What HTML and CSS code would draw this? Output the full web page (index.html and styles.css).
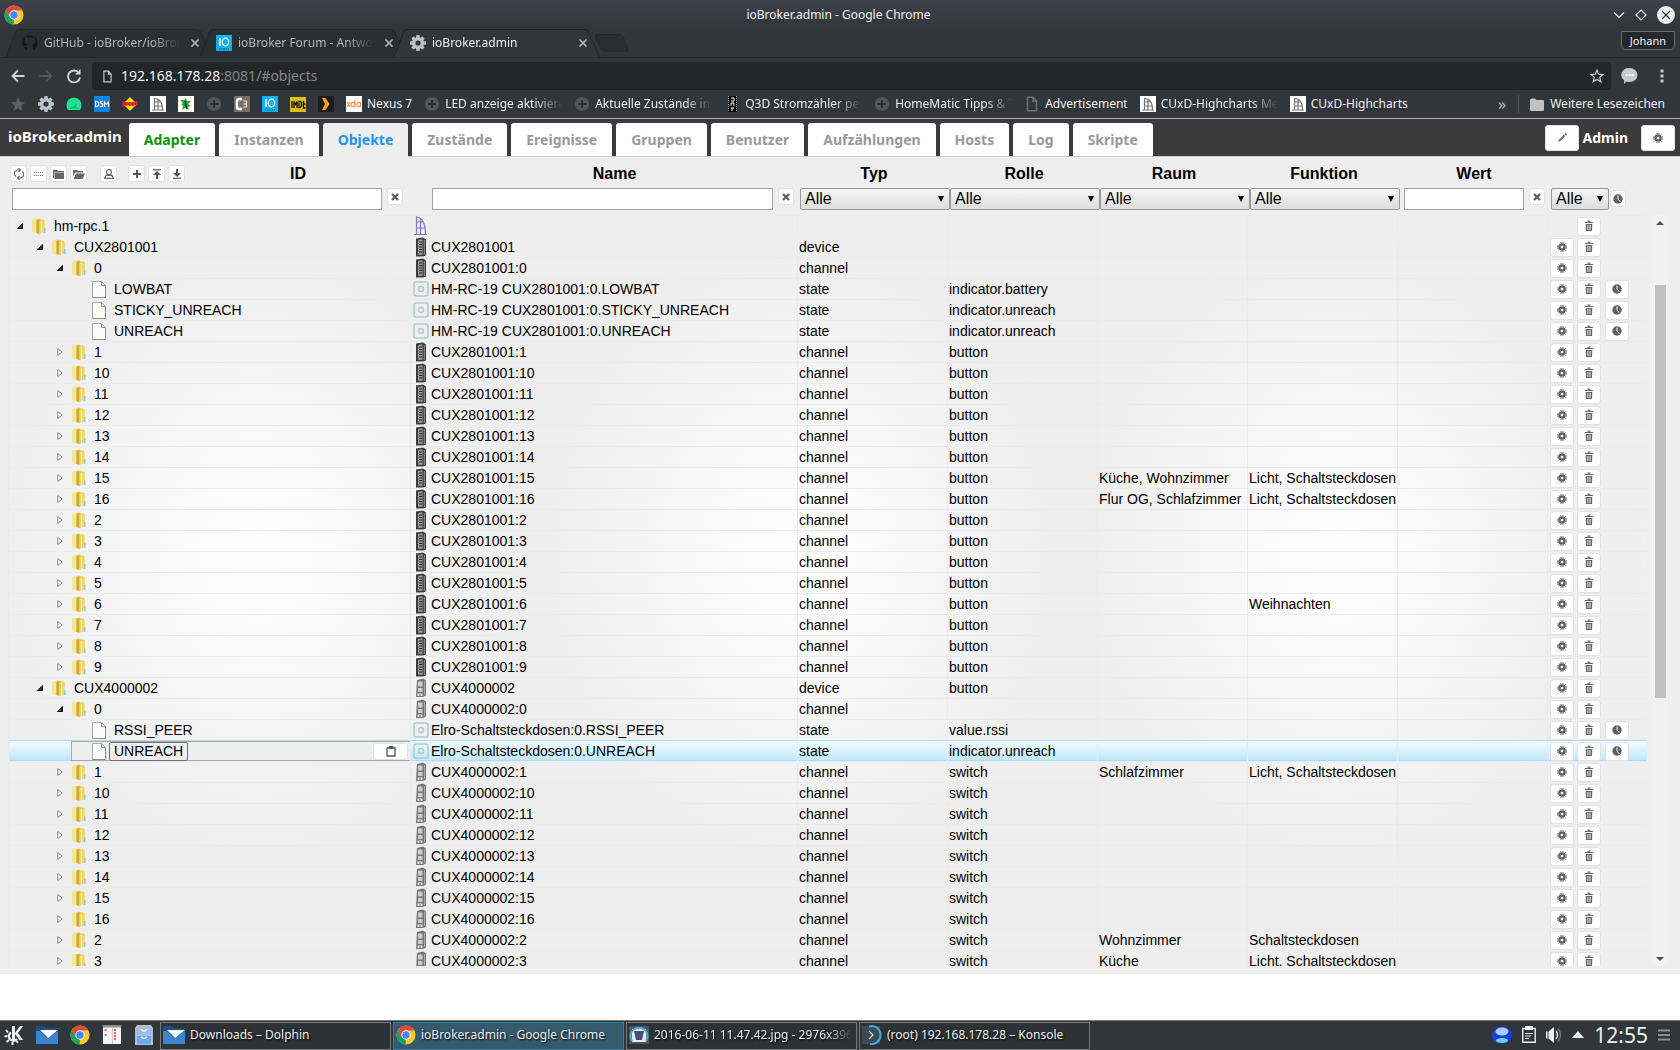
FILE: index.html
```html
<!DOCTYPE html>
<html lang="de">
<head>
<meta charset="utf-8">
<title>ioBroker.admin</title>
<link rel="stylesheet" href="styles.css">
</head>
<body>
<svg class="sprite" width="0" height="0" aria-hidden="true">
  <symbol id="chrome" viewBox="0 0 24 24">
    <circle cx="12" cy="12" r="11.5" fill="#fbc92d"/>
    <path d="M2 6.300A11.500 11.500 0 0 1 22 6.300L12 6.800L7 15Z" fill="#dd4b3e"/>
    <path d="M2 6.300L7.300 15L12 17.500L11.500 23.500A11.500 11.500 0 0 1 2 6.300Z" fill="#1aa260"/>
    <circle cx="12" cy="12" r="5.600" fill="#f4f4f4"/><circle cx="12" cy="12" r="4.400" fill="#4688f1"/>
  </symbol>
  <symbol id="cog" viewBox="0 0 16 16">
    <g fill="#b9c2cb"><circle cx="8" cy="8" r="6"/>
    <path d="M6.500 0h3l.5 3h-4zM6.500 16h3l.5-3h-4zM0 6.500v3l3 .5V6zM16 6.500v3l-3 .5V6zM1.400 3.500l2.100-2.100 2.500 1.800-2.800 2.800zM14.600 12.500l-2.100 2.100-2.500-1.800 2.800-2.800zM3.500 14.600l-2.100-2.100 1.800-2.500 2.800 2.800zM12.500 1.400l2.100 2.100-1.800 2.500-2.800-2.800z"/></g>
    <circle cx="8" cy="8" r="2.600" fill="#31363b"/>
  </symbol>
  <symbol id="io" viewBox="0 0 16 16">
    <rect width="16" height="16" fill="#0bb1f2"/>
    <path d="M4 3v8" stroke="#fff" stroke-width="1.400"/><ellipse cx="9.500" cy="7" rx="3.200" ry="3.800" fill="none" stroke="#fff" stroke-width="1.300"/>
    <path d="M3 14h10" stroke="#0a6f98" stroke-width="1.500" stroke-dasharray="1.500 .7"/>
  </symbol>
  <symbol id="plus" viewBox="0 0 16 16"><circle cx="8" cy="8" r="7" fill="#54585c"/><path d="M8 4v8M4 8h8" stroke="#2c3034" stroke-width="2.200"/></symbol>
  <symbol id="homematic" viewBox="0 0 16 16"><rect width="16" height="16" fill="#fff"/><path d="M4.500 14V2.500C9 2.500 12.500 6 12.500 14M4.500 6h6M4.500 10h7.500M8 3v11M2 14h12" fill="none" stroke="#777" stroke-width="1.200"/></symbol>
  <symbol id="close" viewBox="0 0 10 10"><path d="M1.500 1.500l7 7M8.500 1.500l-7 7" stroke="#b4b6b8" stroke-width="1.700"/></symbol>
  <symbol id="page" viewBox="0 0 10 14"><path d="M1 1h5l3 3.500V13H1zM6 1v3.500h3" fill="none" stroke="currentColor" stroke-width="1.300"/></symbol>
  <symbol id="gear" viewBox="0 0 10 10"><path d="M4 0v10M6 0v10M0 4h10M0 6h10M2 1.500l6.500 7M8.500 1.500L1.500 8.500" stroke="#6a6a6a" stroke-width="1"/><circle cx="5" cy="5" r="2.600" fill="none" stroke="#606060" stroke-width="2"/><circle cx="5" cy="5" r="1.300" fill="#fff"/></symbol>
  <symbol id="trash" viewBox="0 0 10 12"><path d="M1 2.500h8M3.500 1.200h3" stroke="#666" stroke-width="1.200"/><path d="M1.700 4h6.600L8 11H2z" fill="#666"/><path d="M3.700 5v5M5 5v5M6.300 5v5" stroke="#fff" stroke-width=".6"/></symbol>
  <symbol id="clock" viewBox="0 0 10 10"><circle cx="5" cy="5" r="4.700" fill="#606060"/><path d="M5 1.500V5l2.200 2.700" fill="none" stroke="#fff" stroke-width="1"/></symbol>
  <symbol id="cross" viewBox="0 0 8 8"><path d="M1 1l6 6M7 1L1 7" stroke="#606060" stroke-width="2.400"/></symbol>
  <symbol id="clip" viewBox="0 0 10 12"><path d="M1 3h8v8H1z" fill="none" stroke="#555" stroke-width="1.300"/><path d="M3 1h4v3H3z" fill="#555"/></symbol>
  <symbol id="folder" viewBox="0 0 14 16">
    <path d="M.5 2L6 .5 12.500 2v12L7 16 .5 14z" fill="#ecd05a"/><path d="M.5 2L4.500 1v14.200L.5 14z" fill="#f7e78e"/>
    <path d="M4.500 2L7.500 1v14.800L4.500 15z" fill="#cba83e"/><path d="M7.500 2.500l5 1V14l-5 1.500z" fill="#f0d768"/><path d="M9.500 3v12" stroke="#f8eca0"/><path d="M12 10h1.500v5H12z" fill="#8fcbd6"/>
  </symbol>
  <symbol id="file" viewBox="0 0 14 17"><path d="M.5.500h9l4 4v12H.5z" fill="#fafcf7" stroke="#a6a9a4"/><path d="M9.500.500v4h4M13.500 5v11.500H.5" fill="none" stroke="#8b8e89"/></symbol>
  <symbol id="open" viewBox="0 0 6 6"><path d="M5.500.500v5H.5z" fill="#333" stroke="#000"/></symbol>
  <symbol id="shut" viewBox="0 0 6 8"><path d="M.8.600l4.400 3.400-4.400 3.400z" fill="#fff" stroke="#888"/></symbol>
  <symbol id="rpc" viewBox="0 0 14 20"><path d="M2.500 18V1C9 2 11.500 8 11.500 18M2.500 6h6.500M2.500 12h8.500M6.500 2v16M0 18.500h13" fill="none" stroke="#8078b8" stroke-width="1.200"/></symbol>
  <symbol id="remote" viewBox="0 0 12 20"><path d="M1 1.500L8 .5l3 2v16l-3 1H1z" fill="#3c3c3c"/><path d="M3 3l4.500-.7v15.500H3z" fill="#999"/><path d="M4 5h3M4 7.500h3M4 10h3M4 12.500h3M4 15h3" stroke="#222" stroke-width="1.200"/><path d="M9.300 3v15" stroke="#aaa" stroke-width=".8"/></symbol>
  <symbol id="socket" viewBox="0 0 12 20"><path d="M2 2l6-1.500 3 2v15l-3 1.500H1z" fill="#757575"/><path d="M3 3.500h4.500v5H3zM3 10h4.500v4H3z" fill="#ccc"/><path d="M2.500 15.500h5V18h-5z" fill="#eee"/><path d="M5 16v2" stroke="#555"/><path d="M9.500 3v14" stroke="#aaa"/></symbol>
  <symbol id="state" viewBox="0 0 16 16"><rect x="1" y="1" width="14" height="14" rx="2" fill="none" stroke="#b0cad4" stroke-width="1.600"/><circle cx="8" cy="8" r="2.500" fill="none" stroke="#b0cad4" stroke-width="1.500"/></symbol>
  <symbol id="dolphin" viewBox="0 0 22 20"><path d="M0 1h9l2 2h11v16H0z" fill="#1b4f86"/><path d="M0 6h4l7 7 11-7v13H0z" fill="#3b84d0"/><path d="M4 5h18L12 13z" fill="#fff"/></symbol>
</svg>

<header class="browser">
  <div class="titlebar">
    <svg class="i20"><use href="#chrome"/></svg>
    <span class="title">ioBroker.admin - Google Chrome</span>
    <span class="winctl">
      <button class="bare" aria-label="Minimieren"><svg width="12" height="12" viewBox="0 0 12 12"><path d="M1 3.500l5 5 5-5" fill="none" stroke="#e8e8e8" stroke-width="1.200"/></svg></button>
      <button class="bare" aria-label="Maximieren"><svg width="12" height="12" viewBox="0 0 12 12"><path d="M6 1l5 5-5 5-5-5z" fill="none" stroke="#e8e8e8" stroke-width="1.200"/></svg></button>
      <button class="bare" aria-label="Schließen"><svg width="18" height="18" viewBox="0 0 18 18"><circle cx="9" cy="9" r="9" fill="#eff0f1"/><path d="M5 5l8 8M13 5l-8 8" stroke="#31363b" stroke-width="1.200"/></svg></button>
    </span>
  </div>
  <nav class="tabstrip">
    <div class="tab"><svg class="shape" viewBox="0 0 206 29" preserveAspectRatio="none"><path d="M0 28.500L10 2Q11 .5 13 .5H191Q193 .5 194 2L205.500 28.500"/></svg>
      <svg class="i16" viewBox="0 0 16 16"><path d="M8 .5a7.500 7.500 0 0 0-3 14.400v-3q-2 .5-3-1.500 1.500 0 3 .5 0-1 .6-1.500C3 9 2.500 7.500 2.500 6q0-1.300.8-2.200-.2-1 .2-2.100 1.200 0 2.200.8Q8 2 10.300 2.500q1-.8 2.200-.8.400 1.100.2 2.100.8.900.8 2.200c0 1.500-.5 3-3.100 3.400q.6.500.6 1.500v4A7.500 7.500 0 0 0 8 .5z" fill="#15181a"/></svg>
      <a class="fade" href="#github">GitHub - ioBroker/ioBroker</a><button class="bare" aria-label="Tab schließen"><svg class="i10"><use href="#close"/></svg></button></div>
    <div class="tab"><svg class="shape" viewBox="0 0 206 29" preserveAspectRatio="none"><path d="M0 28.500L10 2Q11 .5 13 .5H191Q193 .5 194 2L205.500 28.500"/></svg>
      <svg class="i16"><use href="#io"/></svg>
      <a class="fade" href="#forum">ioBroker Forum - Antworten</a><button class="bare" aria-label="Tab schließen"><svg class="i10"><use href="#close"/></svg></button></div>
    <div class="tab current"><svg class="shape" viewBox="0 0 206 29" preserveAspectRatio="none"><path d="M0 28.500L10 2Q11 .5 13 .5H191Q193 .5 194 2L205.500 28.500"/></svg>
      <svg class="i16"><use href="#cog"/></svg>
      <a class="fade" href="#admin">ioBroker.admin</a><button class="bare" aria-label="Tab schließen"><svg class="i10"><use href="#close"/></svg></button></div>
    <button class="bare newtab" aria-label="Neuer Tab"><svg width="34" height="18" viewBox="0 0 34 18"><path d="M2 .5h23q2 0 3 2l5 13q0 1.500-2 1.500H9q-2 0-3-2L.5 3Q0 .5 2 .5z" fill="#2a2e32" stroke="#24282b"/></svg></button>
    <button class="profile">Johann</button>
  </nav>
  <div class="toolbar">
    <button class="bare" aria-label="Zurück"><svg width="14" height="14" viewBox="0 0 14 14"><path d="M13.500 7H2M7 1.500L1.500 7 7 12.500" fill="none" stroke="#d0d2d3" stroke-width="1.800"/></svg></button>
    <button class="bare" aria-label="Vorwärts"><svg width="14" height="14" viewBox="0 0 14 14"><path d="M.5 7H12M7 1.500L12.500 7 7 12.500" fill="none" stroke="#55595d" stroke-width="1.800"/></svg></button>
    <button class="bare" aria-label="Neu laden"><svg width="14" height="14" viewBox="0 0 14 14"><path d="M12 4A6 6 0 1 0 13 8.500" fill="none" stroke="#d0d2d3" stroke-width="1.900"/><path d="M13.500 0v5.500H8z" fill="#d0d2d3"/></svg></button>
    <div class="omnibox"><svg width="9" height="13" class="lt"><use href="#page"/></svg><span class="url">192.168.178.28<span>:8081/#objects</span></span>
      <svg width="14" height="14" viewBox="0 0 14 14"><path d="M7 1l1.700 4.200 4.500.3-3.500 2.900 1.200 4.400L7 10.400l-3.900 2.400 1.200-4.400L.8 5.500l4.500-.3z" fill="none" stroke="#cfd0d1" stroke-width="1.200"/></svg></div>
    <button class="bare" aria-label="Chat"><svg width="17" height="16" viewBox="0 0 17 16"><path d="M8.500 0a8 7 0 0 1 0 14q-1.500 0-3-.5L3 16l.3-3.500A8 7 0 0 1 8.500 0z" fill="#c8c9ca"/><path d="M4.500 7.200h2m1 0h2m1 0h2" stroke="#fff" stroke-width="1.800"/></svg></button>
    <button class="bare menu" aria-label="Menü"><svg width="4" height="14" viewBox="0 0 4 14"><path d="M.5.500h3v3h-3zM.5 5.500h3v3h-3zM.5 10.500h3v3h-3z" fill="#c8c9ca"/></svg></button>
  </div>
  <nav class="bookmarks">
    <a href="#b1"><svg class="i16" viewBox="0 0 16 16"><path d="M8 1l2 5 5.200.4-4 3.400 1.300 5.200L8 12.200 3.500 15l1.300-5.200-4-3.400L6 6z" fill="#5d5f61"/></svg></a>
    <a href="#b2"><svg class="i16"><use href="#cog"/></svg></a>
    <a href="#b3"><svg class="i16" viewBox="0 0 16 16"><path d="M2 14Q.5 12 .5 9a7.500 7.500 0 0 1 15 0q0 3-1.500 5z" fill="#1fdf96"/><path d="M4 13a5 5 0 0 1 8 0M8 12l2.500-4" stroke="#14a070" fill="none"/></svg></a>
    <a href="#b4"><svg class="i16" viewBox="0 0 16 16"><rect width="16" height="16" rx="1" fill="#0a85e9"/><path d="M1.500 5.500h2l1 1v3l-1 1h-2zM8.700 5.500H6.500v2.300h2.200v2.700H6M10.500 11V6l2 2.500 2-2.500v5" fill="none" stroke="#fff" stroke-width="1.100"/></svg></a>
    <a href="#b5"><svg class="i16" viewBox="0 0 16 16"><path d="M8 1l7 7-7 7-7-7z" fill="#f7d913"/><path d="M1 7h14v1.500H1zM1 5v6M4 6v4M8 6v4M11 6v4M14.500 5v4" fill="#d9252a" stroke="#d9252a" stroke-width="1.500"/></svg></a>
    <a href="#b6"><svg class="i16"><use href="#homematic"/></svg></a>
    <a href="#b7"><svg class="i16" viewBox="0 0 16 16"><rect width="16" height="16" fill="#fff"/><path d="M2 4h4l2-2 1 3h4l-3 3 3 2-3 1 1 3-4-2-3 2 1-4-2-2 2-1z" fill="#37a037"/><path d="M7 5l2 8" stroke="#165016" stroke-width="1.500"/></svg></a>
    <a href="#b8"><svg class="i16"><use href="#plus"/></svg></a>
    <a href="#b9"><svg class="i16" viewBox="0 0 16 16"><rect width="16" height="16" fill="#77706a"/><path d="M8 3H5Q3 3 3 5v6q0 2 2 2h3" fill="none" stroke="#fff" stroke-width="2.400"/><path d="M9.500 5h3v6h-3M9.500 8h3" fill="none" stroke="#eee"/></svg></a>
    <a href="#b10"><svg class="i16"><use href="#io"/></svg></a>
    <a href="#b11"><svg class="i16" viewBox="0 0 16 16"><rect y="1" width="16" height="15" fill="#e3bd13"/><path d="M2 5v7M4 12V5.500l1.500 3L7 5.500V12M9 5.500h1.500l1 1v4l-1 1H9zM13.500 5v7h2M13.500 8h2" fill="none" stroke="#111" stroke-width="1.300"/></svg></a>
    <a href="#b12"><svg class="i16" viewBox="0 0 16 16"><rect width="16" height="16" fill="#1c1c1c"/><path d="M4 2h3.500l4 6-4 6H4l3-6z" fill="#f0a01a"/></svg></a>
    <a href="#b13"><svg class="i16" viewBox="0 0 16 16"><rect width="16" height="16" fill="#fff"/><path d="M1 6l3 5M4 6l-3 5M9 4v7M9 8.500a2 2.300 0 1 0 0 .1M14.500 6v5M14.500 8.500a1.800 2.300 0 1 0 0 .1" fill="none" stroke="#ef8a3a" stroke-width="1.100"/></svg><span>Nexus 7</span></a>
    <a href="#b14" class="long"><svg class="i16"><use href="#plus"/></svg><span class="fade">LED anzeige aktivieren</span></a>
    <a href="#b15" class="long"><svg class="i16"><use href="#plus"/></svg><span class="fade">Aktuelle Zustände in V</span></a>
    <a href="#b16" class="long"><svg class="i16" viewBox="0 0 16 16"><rect x="4" width="9" height="16" fill="#050505"/><path d="M7 2h3v3H7M7 7h3v3M7 7v3M7 12h3M8 12v3" fill="none" stroke="#fff"/><path d="M4.500 0v16M12.500 0v16" stroke="#aaa" stroke-dasharray="1 1"/></svg><span class="fade">Q3D Stromzähler per V</span></a>
    <a href="#b17" class="long"><svg class="i16"><use href="#plus"/></svg><span class="fade">HomeMatic Tipps &amp; Tr</span></a>
    <a href="#b18"><svg class="i16 dim"><use href="#page"/></svg><span>Advertisement</span></a>
    <a href="#b19" class="long"><svg class="i16"><use href="#homematic"/></svg><span class="fade">CUxD-Highcharts Menü</span></a>
    <a href="#b20"><svg class="i16"><use href="#homematic"/></svg><span>CUxD-Highcharts</span></a>
    <button class="bare more" aria-label="Weitere">»</button>
    <a href="#b21" class="others"><svg width="14" height="13" viewBox="0 0 14 13"><path d="M0 2Q0 .5 1.500.500H5L6.500 2H13q1 0 1 1v9q0 1-1 1H1q-1 0-1-1z" fill="#bfc1c2"/></svg><span>Weitere Lesezeichen</span></a>
  </nav>
</header>

<main class="viewport">
  <div class="admin">
    <header class="mainbar">
      <h1>ioBroker.admin</h1>
      <nav class="tabs">
        <a href="#adapter" class="green">Adapter</a><a href="#instances">Instanzen</a><a href="#objects" class="active">Objekte</a><a href="#states">Zustände</a><a href="#events">Ereignisse</a><a href="#groups">Gruppen</a><a href="#users">Benutzer</a><a href="#enums">Aufzählungen</a><a href="#hosts">Hosts</a><a href="#log">Log</a><a href="#scripts">Skripte</a>
      </nav>
      <div class="user">
        <button class="big" aria-label="Bearbeiten"><svg class="i10" viewBox="0 0 10 10"><path d="M1 9l1-2.500L7 1.500 8.500 3l-5 5z" fill="#777"/><path d="M8 .5L9.500 2" stroke="#555" stroke-width="1.500"/></svg></button>
        <span>Admin</span>
        <button class="big" aria-label="Einstellungen"><svg class="i10"><use href="#gear"/></svg></button>
      </div>
    </header>

    <div class="filters">
      <div class="cell idcell">
        <div class="head">
          <div class="tools">
            <button aria-label="Aktualisieren"><svg width="12" height="12" viewBox="0 0 12 12"><path d="M3 8.500L1.500 7V4L4 2h3M5.500 0l2 2-2 2M9 3.500L10.500 5v3L8 10H5M6.500 8l-2 2 2 2" fill="none" stroke="#666" stroke-width="1.100"/></svg></button>
            <button aria-label="Liste"><svg width="10" height="8" viewBox="0 0 10 8"><path d="M0 2.500h10M0 5.500h10" stroke="#777" stroke-dasharray="1 1"/></svg></button>
            <button aria-label="Alle zuklappen"><svg width="12" height="10" viewBox="0 0 12 10"><path d="M0 1h4l1 1h6v1.500H1V9H0z" fill="#666"/><path d="M1.500 4H11v6H1.500z" fill="#666"/></svg></button>
            <button aria-label="Alle aufklappen"><svg width="12" height="10" viewBox="0 0 12 10"><path d="M0 1h4l1 1h5v1.500H2L0 8z" fill="#666"/><path d="M3 4.500h9L9.500 10H.5z" fill="#666"/></svg></button>
            <button class="sep" aria-label="Expertenmodus"><svg width="10" height="10" viewBox="0 0 10 10"><circle cx="5" cy="3.200" r="2.500" fill="none" stroke="#666" stroke-width="1.200"/><path d="M.6 9.400l1.500-3h5.800l1.500 3z" fill="none" stroke="#666" stroke-width="1.200"/></svg></button>
            <button class="gap" aria-label="Neu"><svg width="8" height="8" viewBox="0 0 8 8"><path d="M4 0v8M0 4h8" stroke="#555" stroke-width="2"/></svg></button>
            <button aria-label="Hochladen"><svg width="8" height="10" viewBox="0 0 8 10"><path d="M0 .8h8" stroke="#555" stroke-width="1.200"/><path d="M4 2l4 4H5v4H3V6H0z" fill="#555"/></svg></button>
            <button aria-label="Herunterladen"><svg width="8" height="10" viewBox="0 0 8 10"><path d="M0 9.200h8" stroke="#555" stroke-width="1.200"/><path d="M4 8L0 4h3V0h2v4h3z" fill="#555"/></svg></button>
          </div>
          <label for="f-id">ID</label>
        </div>
        <div class="control"><input type="text" id="f-id"><button aria-label="Löschen"><svg class="i8"><use href="#cross"/></svg></button></div>
      </div>
      <div class="cell namecell">
        <div class="head"><label for="f-name">Name</label></div>
        <div class="control"><input type="text" id="f-name"><button aria-label="Löschen"><svg class="i8"><use href="#cross"/></svg></button></div>
      </div>
      <div class="cell"><div class="head"><label for="f-type">Typ</label></div><div class="control select"><select id="f-type"><option>Alle</option></select></div></div>
      <div class="cell"><div class="head"><label for="f-role">Rolle</label></div><div class="control select"><select id="f-role"><option>Alle</option></select></div></div>
      <div class="cell"><div class="head"><label for="f-room">Raum</label></div><div class="control select"><select id="f-room"><option>Alle</option></select></div></div>
      <div class="cell"><div class="head"><label for="f-func">Funktion</label></div><div class="control select"><select id="f-func"><option>Alle</option></select></div></div>
      <div class="cell valcell">
        <div class="head"><label for="f-val">Wert</label></div>
        <div class="control"><input type="text" id="f-val"><button aria-label="Löschen"><svg class="i8"><use href="#cross"/></svg></button></div>
      </div>
      <div class="cell btncell"><div class="head"></div><div class="control"><span class="select small"><select aria-label="Historie"><option>Alle</option></select></span><button aria-label="Verlauf"><svg class="i10"><use href="#clock"/></svg></button></div></div>
    </div>

    <div class="tree">
      <div class="scroll">
        <table>
          <colgroup><col class="c-id"><col class="c-icon"><col><col class="c-std"><col class="c-std"><col class="c-std"><col class="c-std"><col class="c-std"><col class="c-btn"></colgroup>
          <tbody id="rows"></tbody>
        </table>
      </div>
      <div class="scrollbar"><span class="arrow up"></span><span class="thumb"></span><span class="arrow down"></span></div>
    </div>
  </div>
</main>

<footer class="taskbar">
  <nav class="launch">
    <a href="#k" aria-label="Startmenü"><svg width="20" height="20" viewBox="0 0 20 20"><path d="M8 1h3v7l5-7h3l-5 7 5 7h-3.500L11 9v6H8z" fill="#eff0f1"/><path d="M7 7.500A4.500 4.500 0 1 0 13 14" fill="none" stroke="#eff0f1" stroke-width="2.200"/><path d="M2 5l2 2.500M.5 11.500l3-.5M2.500 17l2.500-2M8.500 20v-3M14 18l-1.500-2" stroke="#eff0f1" stroke-width="2"/></svg></a>
    <a href="#files" aria-label="Dateien"><svg width="22" height="20"><use href="#dolphin"/></svg></a>
    <a href="#chrome-app" aria-label="Chrome"><svg class="i20"><use href="#chrome"/></svg></a>
    <a href="#cal" aria-label="Kalender"><svg width="20" height="20" viewBox="0 0 20 20"><path d="M1 1h18v18H1z" fill="#f5f5f5"/><path d="M1 0h18v2.500H1z" fill="#8a8f94"/><path d="M10.500 3v16" stroke="#ccc"/><path d="M2.500 5h2M2.500 10h2M12 5h2M12 8h2M12 11h2M12 14h2" stroke="#d33" stroke-width="1.600"/></svg></a>
    <a href="#drawer" aria-label="Schublade"><svg width="20" height="20" viewBox="0 0 20 20"><path d="M1 3l2-3h14l2 3v17H1z" fill="#b9bdc0"/><path d="M3 4h14v6H3z" fill="#8fc0f8"/><path d="M3 11h14v8H3z" fill="#6aaaf5"/><path d="M7 4.500q3 3 6 0M7 12q3 3 6 0" fill="none" stroke="#fff" stroke-width="1.500"/></svg></a>
  </nav>
  <nav class="tasks">
    <button><svg width="22" height="20"><use href="#dolphin"/></svg><span>Downloads – Dolphin</span></button>
    <button class="active"><svg class="i20"><use href="#chrome"/></svg><span>ioBroker.admin - Google Chrome</span></button>
    <button><svg class="i20" viewBox="0 0 20 20"><path d="M0 1h20v18H0z" fill="#4b5560"/><path d="M3 4h14v13H3z" fill="#e8e8e8"/><path d="M5 6h10l-2 9H7z" fill="#4a4f70"/><path d="M3 16a8.500 8.500 0 1 1 14 0" fill="none" stroke="#3daee9" stroke-width="2"/></svg><span class="fade">2016-06-11 11.47.42.jpg - 2976x3968</span></button>
    <button><svg class="i20" viewBox="0 0 20 20"><path d="M0 1h18v18H0z" fill="#3e4a52"/><path d="M7 6l4 4-4 4" fill="none" stroke="#d8d8d8" stroke-width="1.200"/><path d="M7 1.500A9 9 0 1 1 8 19" fill="none" stroke="#3daee9" stroke-width="2"/></svg><span>(root) 192.168.178.28 – Konsole</span></button>
  </nav>
  <div class="tray">
    <svg width="20" height="18" viewBox="0 0 20 18"><ellipse cx="10" cy="9" rx="10" ry="8.500" fill="#1540e8"/><ellipse cx="10" cy="5.500" rx="6.500" ry="4" fill="#a9cdf8"/><ellipse cx="10" cy="14.500" rx="6" ry="2.500" fill="#63d4f7"/></svg>
    <svg width="14" height="17" viewBox="0 0 14 17"><path d="M.8 2.500h12.400v13.700H.8z" fill="none" stroke="#eff0f1" stroke-width="1.400"/><path d="M3 0h8v4H3z" fill="#eff0f1"/><path d="M3 7.500h8M3 10h6M3 12.500h4" stroke="#eff0f1"/></svg>
    <svg width="16" height="18" viewBox="0 0 16 18"><path d="M0 5.500h1.500v7H0zM2.500 5.500L8 1v16l-5.500-4.500z" fill="#eff0f1"/><path d="M10 5q3 4 0 8" fill="none" stroke="#eff0f1" stroke-width="1.300"/><path d="M12 2.500q5 6.500 0 13" fill="none" stroke="#7c8084" stroke-width="1.300"/></svg>
    <svg width="12" height="7" viewBox="0 0 12 7"><path d="M0 7l6-7 6 7z" fill="#eff0f1"/></svg>
    <time>12:55</time>
    <svg width="12" height="12" viewBox="0 0 12 12"><path d="M0 1.500h12M0 6h12M0 10.500h12" stroke="#8b8f92" stroke-width="2"/></svg>
  </div>
</footer>
<script src="app.js"></script>
</body>
</html>
```
FILE: styles.css
```css
* { box-sizing: border-box; }
html, body { height: 100%; }
body {
  margin: 0;
  display: flex;
  flex-direction: column;
  overflow: hidden;
  background: #fff;
  font: 14px/20px "Liberation Sans", Arial, sans-serif;
  color: #000;
}
a { color: inherit; text-decoration: none; }
button { font: inherit; color: inherit; cursor: pointer; }
svg { display: block; flex: none; }
.sprite { position: absolute; }
.i8 { width: 8px; height: 8px; }
.i10 { width: 10px; height: 10px; }
.i16 { width: 16px; height: 16px; }
.i20 { width: 20px; height: 20px; }
.bare { border: 0; padding: 0; background: none; display: flex; }
.fade {
  overflow: hidden;
  white-space: nowrap;
  -webkit-mask-image: linear-gradient(to left, transparent, #000 28px);
  mask-image: linear-gradient(to left, transparent, #000 28px);
}

/* browser window */
.browser, .taskbar { font: 12px/18px "Noto Sans", sans-serif; color: #eff0f1; flex: none; }
.browser { background: #31363b; border-bottom: 1px solid #b5b1ba; }
.titlebar {
  height: 29px;
  display: flex;
  align-items: center;
  justify-content: space-between;
  padding: 0 5px 0 4px;
  background: linear-gradient(#3e424c, #31363b);
}
.titlebar > .i20 { margin-right: 40px; }
.winctl { display: flex; align-items: center; gap: 10px; }
.tabstrip {
  height: 29px;
  display: flex;
  align-items: center;
  padding-left: 6px;
  border-bottom: 1px solid #25292c;
}
.tab {
  position: relative;
  flex: 0 0 194px;
  min-width: 0;
  height: 29px;
  display: flex;
  align-items: center;
  gap: 6px;
  padding-left: 16px;
  color: #b3b5b7;
}
.tab .shape { position: absolute; inset: 0 auto 0 0; width: 206px; height: 29px; fill: #2b2f33; stroke: #212528; }
.tab > * { position: relative; }
.tab .fade { flex: 1; }
.tab button { margin: 0 0 0 4px; }
.tab.current { color: #eff0f1; }
.tab.current .shape { fill: #31363b; }
.newtab { margin-left: 7px; }
.profile {
  margin: 0 5px 0 auto;
  align-self: flex-start;
  height: 19px;
  margin-top: 2px;
  padding: 0 8px;
  border: 1px solid #6a6e72;
  border-radius: 0 0 4px 4px;
  background: #24282b;
  font-size: 11px;
  line-height: 14px;
}
.toolbar { height: 36px; display: flex; align-items: center; gap: 14px; padding: 0 16px 0 11px; }
.omnibox {
  flex: 1;
  height: 28px;
  margin: 0 -4px 0 -3px;
  display: flex;
  align-items: center;
  gap: 9px;
  padding: 0 7px 0 11px;
  border-radius: 3px;
  background: #232629;
}
.url { flex: 1; font-size: 14px; }
.url span { color: #85888a; }
.lt { color: #c8c9ca; }
.menu { margin-left: 8px; }
.bookmarks { height: 24px; display: flex; align-items: center; gap: 12px; padding: 0 15px 4px 10px; }
.bookmarks a { display: flex; align-items: center; gap: 5px; white-space: nowrap; }
.bookmarks .long { width: 138px; }
.bookmarks .long .fade { flex: 1; }
.dim { color: #6b6e70; }
.more { margin-left: auto; color: #bbb; font-size: 16px; }
.bookmarks .others { padding-left: 11px; border-left: 1px solid #54585c; gap: 6px; }

/* admin page */
.viewport { flex: 1; min-height: 0; display: flex; flex-direction: column; }
.admin {
  flex: 1;
  min-height: 0;
  margin-bottom: 46px;
  padding-bottom: 8px;
  display: flex;
  flex-direction: column;
  background: #eee;
}
.mainbar {
  flex: none;
  height: 38px;
  display: flex;
  align-items: center;
  padding: 0 5px 0 8px;
  background: #3b3b3b;
  border-bottom: 1px solid #c8c8c8;
  font: bold 14px/20px "Noto Sans", sans-serif;
  color: #fff;
}
.mainbar h1 { margin: 0 7px 4px 0; font-size: 15px; line-height: 20px; }
.tabs { display: flex; gap: 4px; align-self: flex-end; }
.tabs a {
  height: 33px;
  padding: 7px 15px 0;
  border-radius: 3px 3px 0 0;
  background: #fff;
  color: #999;
}
.tabs .green { color: #0a930a; }
.tabs .active { background: #eee; color: #2694e8; height: 34px; margin-bottom: -1px; }
.user { margin-left: auto; display: flex; align-items: center; gap: 4px; }
.user span { margin-right: 9px; }
.big, .tools button, .control button, .ops button, .copy {
  display: flex;
  align-items: center;
  justify-content: center;
  padding: 0;
  border: 1px solid #e2e2e2;
  border-radius: 3px;
  background: #fff;
}
.big { width: 34px; height: 26px; }

.filters {
  flex: none;
  display: grid;
  grid-template-columns: 403px minmax(0, 1fr) repeat(5, 150px) 99px;
  padding: 0 32px 5px 8px;
}
.head { height: 31px; display: flex; align-items: center; padding-top: 2px; }
.head label { flex: 1; text-align: center; font: bold 16px/20px "Liberation Sans", Arial, sans-serif; }
.tools { display: flex; gap: 3px; padding-left: 2px; }
.tools button, .control button { width: 17px; height: 17px; }
.tools .sep { margin-left: 10px; }
.tools .gap { margin-left: 8px; }
.control { display: flex; gap: 5px; height: 22px; }
.control input { flex: 1; min-width: 0; height: 22px; border: 1px solid #a5a5a5; background: #fff; padding: 0 3px; font: inherit; }
.control button { width: 16px; }
.idcell .head { margin-right: -8px; }
.idcell { padding: 0 8px 0 0; }
.idcell .control { padding-left: 4px; }
.namecell .control { padding: 0 5px 0 21px; }
.namecell .head { padding-left: 19px; }
.valcell .control { padding: 0 4px 0 5px; }
.btncell .control { padding-left: 2px; gap: 1px; }
.btncell .control button { margin-top: 2px; }
.select { position: relative; padding-left: 1px; margin-right: -1px; }
.select select {
  appearance: none;
  width: 100%;
  height: 22px;
  padding: 0 4px;
  border: 1px solid #999;
  border-radius: 2px;
  background: linear-gradient(#f6f6f6, #dcdcdc);
  font: 16px/20px "Liberation Sans", Arial, sans-serif;
  color: #000;
}
.select::after {
  content: "";
  position: absolute;
  right: 6px;
  top: 8px;
  border: 3px solid transparent;
  border-top: 6px solid #000;
  border-bottom: 0;
}
.select.small { width: 58px; padding: 0; margin: 0; }

.tree { flex: 1; min-height: 0; display: flex; gap: 5px; padding: 0 12px 0 8px; }
.scroll {
  flex: 1;
  min-width: 0;
  overflow: hidden;
  border-left: 1px solid #ebebeb;
  background: radial-gradient(ellipse 270px 320px at center, #fefefe, #fbfbfb 25%, #f3f3f3 65%, #eee) -20px 20px / 540px 640px repeat-x;
}
table { width: 100%; border-collapse: separate; border-spacing: 0; table-layout: fixed; }
.c-id { width: 402px; }
.c-icon { width: 20px; }
.c-std { width: 150px; }
.c-btn { width: 99px; }
td {
  height: 21px;
  padding: 0;
  border-top: 1px solid #ebebeb;
  border-right: 1px solid #ebebeb;
  line-height: 20px;
  white-space: nowrap;
}
td:nth-child(n+4) { padding-left: 1px; }
td:last-child { border-right: 0; }
.node { display: flex; align-items: center; height: 20px; padding-left: 7px; gap: 8px; }
.lv1 { padding-left: 27px; }
.lv2 { padding-left: 47px; }
.lv3 { padding-left: 83px; }
.exp { width: 8px; display: flex; justify-content: center; }
.pic { display: flex; justify-content: center; }
.ops { display: flex; gap: 3px; padding-left: 1px; height: 20px; align-items: center; }
.ops button { width: 24px; height: 19px; }
.ops .none { width: 24px; }
.ops .hist { margin-left: 1px; }
.selected td {
  border-top-color: #a8def5;
  box-shadow: inset 0 -1px #a8def5;
  background: linear-gradient(#f4fbff, #bde8fb);
}
.selected .node {
  margin-left: 62px;
  padding: 0 2px 0 20px;
  background: #eee;
  border: 1px solid #aaa;
  border-right: 0;
  gap: 3px;
}
.selected .node a { border: 1px solid #6d7278; border-radius: 2px; padding: 0 4px; line-height: 17px; }
.copy { width: 35px; height: 17px; margin-left: auto; }

.scrollbar { flex: none; width: 16px; display: flex; flex-direction: column; align-items: center; background: #f1f1f1; }
.scrollbar .thumb { width: 11px; flex: 0 0 55%; margin-top: 60px; background: #c1c1c1; }
.arrow { border: 4px solid transparent; }
.up { border-bottom-color: #505050; border-top-width: 0; margin-top: 6px; }
.down { border-top-color: #505050; border-bottom-width: 0; margin: auto 0 5px; }

/* desktop panel */
.taskbar {
  height: 30px;
  display: flex;
  align-items: center;
  padding: 0 10px 0 4px;
  background: #31363b;
  border-top: 1px solid #75797c;
}
.launch { display: flex; align-items: center; gap: 12px; padding: 0 6px 2px 0; }
.tasks { display: flex; gap: 2px; }
.tasks button {
  width: 231px;
  height: 28px;
  display: flex;
  align-items: center;
  gap: 5px;
  padding: 0 3px 2px 2px;
  border: 1px solid #75797c;
  background: #2d3236;
  text-shadow: 1px 1px 2px #000;
  white-space: nowrap;
}
.tasks .active { background: #355a6e; border-color: #2f80ab; }
.tray { margin-left: auto; display: flex; align-items: center; gap: 10px; padding-bottom: 2px; }
time { font-size: 21px; line-height: 26px; }
```
FILE: app.js
```js
// Each row: [level, kind, id, icon, name, type, role, rooms, functions]
// kind: o = open folder, c = closed folder, f = state without children
var rows = [
  [0, "o", "hm-rpc.1", "rpc", "", "", ""],
  [1, "o", "CUX2801001", "remote", "CUX2801001", "device", ""],
  [2, "o", "0", "remote", "CUX2801001:0", "channel", ""],
  [3, "f", "LOWBAT", "state", "HM-RC-19 CUX2801001:0.LOWBAT", "state", "indicator.battery"],
  [3, "f", "STICKY_UNREACH", "state", "HM-RC-19 CUX2801001:0.STICKY_UNREACH", "state", "indicator.unreach"],
  [3, "f", "UNREACH", "state", "HM-RC-19 CUX2801001:0.UNREACH", "state", "indicator.unreach"]
];

var enums = {
  "CUX2801001:15": ["Küche, Wohnzimmer", "Licht, Schaltsteckdosen"],
  "CUX2801001:16": ["Flur OG, Schlafzimmer", "Licht, Schaltsteckdosen"],
  "CUX2801001:6": ["", "Weihnachten"],
  "CUX4000002:1": ["Schlafzimmer", "Licht, Schaltsteckdosen"],
  "CUX4000002:2": ["Wohnzimmer", "Schaltsteckdosen"],
  "CUX4000002:3": ["Küche", "Licht, Schaltsteckdosen"]
};

function channels(device, icon, role, list) {
  list.forEach(function (n) {
    var name = device + ":" + n;
    rows.push([2, "c", String(n), icon, name, "channel", role].concat(enums[name] || []));
  });
}

channels("CUX2801001", "remote", "button", [1, 10, 11, 12, 13, 14, 15, 16, 2, 3, 4, 5, 6, 7, 8, 9]);
rows.push(
  [1, "o", "CUX4000002", "socket", "CUX4000002", "device", "button"],
  [2, "o", "0", "socket", "CUX4000002:0", "channel", ""],
  [3, "f", "RSSI_PEER", "state", "Elro-Schaltsteckdosen:0.RSSI_PEER", "state", "value.rssi"],
  [3, "f", "UNREACH", "state", "Elro-Schaltsteckdosen:0.UNREACH", "state", "indicator.unreach"]
);
var selected = rows.length - 1;
channels("CUX4000002", "socket", "switch", [1, 10, 11, 12, 13, 14, 15, 16, 2, 3]);

var sizes = {
  open: [6, 6], shut: [6, 8], folder: [14, 16], file: [14, 17], gear: [10, 10], trash: [10, 12],
  clock: [10, 10], rpc: [14, 20], remote: [12, 20], socket: [12, 20], state: [16, 16], clip: [10, 12]
};

function icon(name) {
  return '<svg width="' + sizes[name][0] + '" height="' + sizes[name][1] + '"><use href="#' + name + '"/></svg>';
}

function button(name, label, cls) {
  return '<button class="' + cls + '" aria-label="' + label + '">' + icon(name) + "</button>";
}

document.getElementById("rows").innerHTML = rows.map(function (r, i) {
  var expander = r[1] === "f" ? "" : '<span class="exp">' + icon(r[1] === "o" ? "open" : "shut") + "</span>";
  var node = '<div class="node lv' + r[0] + '">' + expander + icon(r[1] === "f" ? "file" : "folder") +
    '<a href="#' + r[2] + '">' + r[2] + "</a>" + (i === selected ? button("clip", "ID kopieren", "copy") : "") + "</div>";
  var ops = (i ? button("gear", "Bearbeiten", "edit") : '<span class="none"></span>') +
    button("trash", "Löschen", "del") + (r[5] === "state" ? button("clock", "Verlauf", "hist") : "");
  return "<tr" + (i === selected ? ' class="selected"' : "") + "><td>" + node + "</td><td><div class=\"pic\">" + icon(r[3]) +
    "</div></td><td>" + [r[4], r[5], r[6], r[7] || "", r[8] || "", ""].join("</td><td>") +
    '</td><td><div class="ops">' + ops + "</div></td></tr>";
}).join("");
```
